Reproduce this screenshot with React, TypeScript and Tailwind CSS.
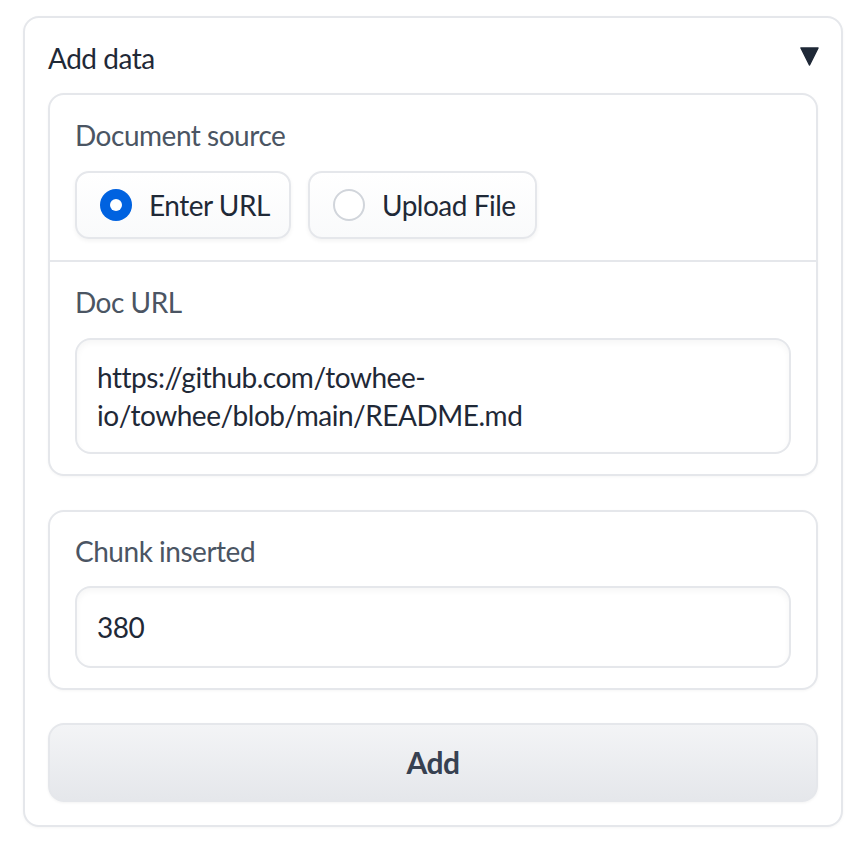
import React from "react";

const font = { fontFamily: "Lato, 'Noto Sans', sans-serif" };

function Radio({ label, checked }: { label: string; checked?: boolean }) {
  return (
    <label className="flex h-[68px] items-center gap-[17px] rounded-[14px] border-2 border-[#e5e7eb] bg-gradient-to-b from-white to-[#f9fafb] pl-[23px] pr-[19px] shadow-[0_2px_4px_rgba(0,0,0,0.05)]">
      {checked ? (
        <span className="flex h-[32px] w-[32px] items-center justify-center rounded-full bg-[#0062e0]">
          <span className="h-[12px] w-[12px] rounded-full bg-white" />
        </span>
      ) : (
        <span className="h-[32px] w-[32px] rounded-full border-2 border-[#d1d5db] bg-white" />
      )}
      <span className="text-[28px] leading-[36px] text-[#1f2937]">{label}</span>
    </label>
  );
}

function FieldBox({ children, className }: { children: React.ReactNode; className?: string }) {
  return (
    <div
      className={
        "rounded-[16px] border-2 border-[#e5e7eb] bg-white px-[20px] text-[28px] leading-[38px] text-[#1f2937] shadow-[inset_0_3px_6px_rgba(0,0,0,0.04)] " +
        (className ?? "")
      }
    >
      {children}
    </div>
  );
}

export default function App() {
  return (
    <div className="min-h-[846px] w-[866px] bg-white pt-[16px] pl-[23px] tracking-[-0.03em]" style={font}>
      <div className="w-[820px] rounded-[16px] border-2 border-[#e5e7eb] bg-white p-[23px] shadow-[0_1px_3px_rgba(0,0,0,0.04)]">
        <div className="flex h-[52px] items-start justify-between">
          <span className="text-[28px] leading-[34px] text-[#1f2937]">Add data</span>
          <svg width="19" height="19" viewBox="0 0 19 19" className="mt-[6px] mr-[-1px]">
            <polygon points="1,1 18,1 9.5,18" fill="#1f2937" stroke="#1f2937" strokeWidth="1.5" strokeLinejoin="round" />
          </svg>
        </div>

        <div className="rounded-[16px] border-2 border-[#e5e7eb] bg-white shadow-[0_1px_3px_rgba(0,0,0,0.04)]">
          <div className="px-[25px] pt-[22px] pb-[21px]">
            <div className="text-[28px] leading-[36px] text-[#4b5563]">Document source</div>
            <div className="mt-[18px] flex gap-[17px]">
              <Radio label="Enter URL" checked />
              <Radio label="Upload File" />
            </div>
          </div>
          <div className="border-t-2 border-[#e5e7eb] px-[25px] pt-[22px] pb-[20px]">
            <div className="text-[28px] leading-[36px] text-[#4b5563]">Doc URL</div>
            <FieldBox className="mt-[18px] py-[18px]">
              https://github.com/towhee-io/towhee/blob/main/README.md
            </FieldBox>
          </div>
        </div>

        <div className="mt-[34px] rounded-[16px] border-2 border-[#e5e7eb] bg-white px-[25px] pt-[21px] pb-[20px] shadow-[0_1px_3px_rgba(0,0,0,0.04)]">
          <div className="text-[28px] leading-[36px] text-[#4b5563]">Chunk inserted</div>
          <FieldBox className="mt-[17px] py-[20px]">380</FieldBox>
        </div>

        <button className="mt-[33px] flex h-[79px] w-full items-center justify-center rounded-[16px] border-2 border-[#e5e7eb] bg-gradient-to-b from-[#f3f4f6] to-[#e5e7eb] text-[30px] font-bold text-[#374151] shadow-[0_1px_3px_rgba(0,0,0,0.05)]">
          Add
        </button>
      </div>
    </div>
  );
}
